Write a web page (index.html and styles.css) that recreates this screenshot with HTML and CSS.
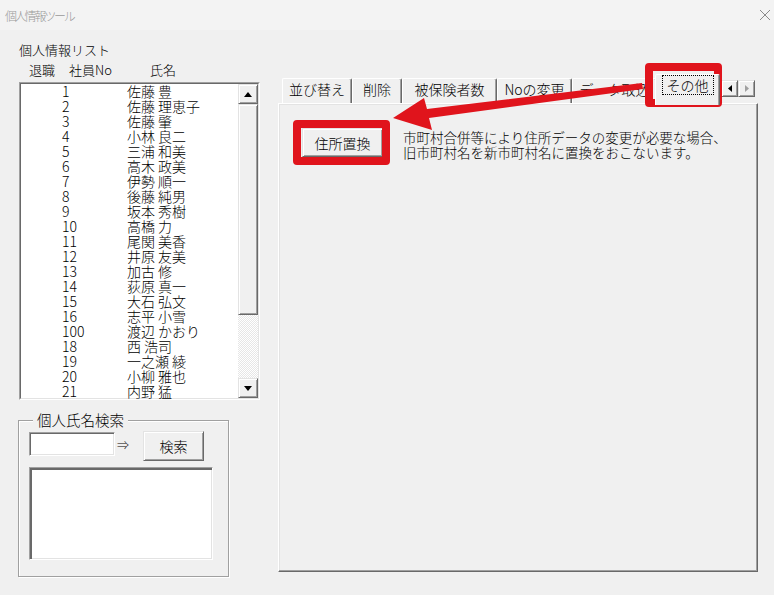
FILE: index.html
```html
<!DOCTYPE html>
<html lang="ja">
<head>
  <meta charset="UTF-8" />
  <title>個人情報ツール</title>
  <link rel="stylesheet" href="styles.css">
</head>
<body>
<div class="window">
  <div class="titlebar">
    <span class="title">個人情報ツール</span>
    <svg class="close" width="12" height="12" viewBox="0 0 12 12"><path d="M1 1L11 11M11 1L1 11" stroke="#8a8a8a" stroke-width="1" fill="none"/></svg>
  </div>

  <div class="main">
    <!-- 左側：一覧と検索 -->
    <div class="left">
      <div class="caption">個人情報リスト</div>
      <div class="heads"><span class="h-ret">退職</span><span class="h-no">社員No</span><span>氏名</span></div>

      <div class="listbox">
        <div class="listbox-in">
          <ul class="rows">
            <li><span class="no">1</span><span>佐藤 豊</span></li>
            <li><span class="no">2</span><span>佐藤 理恵子</span></li>
            <li><span class="no">3</span><span>佐藤 肇</span></li>
            <li><span class="no">4</span><span>小林 良二</span></li>
            <li><span class="no">5</span><span>三浦 和美</span></li>
            <li><span class="no">6</span><span>高木 政美</span></li>
            <li><span class="no">7</span><span>伊勢 順一</span></li>
            <li><span class="no">8</span><span>後藤 純男</span></li>
            <li><span class="no">9</span><span>坂本 秀樹</span></li>
            <li><span class="no">10</span><span>高橋 力</span></li>
            <li><span class="no">11</span><span>尾関 美香</span></li>
            <li><span class="no">12</span><span>井原 友美</span></li>
            <li><span class="no">13</span><span>加古 修</span></li>
            <li><span class="no">14</span><span>荻原 真一</span></li>
            <li><span class="no">15</span><span>大石 弘文</span></li>
            <li><span class="no">16</span><span>志平 小雪</span></li>
            <li><span class="no">100</span><span>渡辺 かおり</span></li>
            <li><span class="no">18</span><span>西 浩司</span></li>
            <li><span class="no">19</span><span>一之瀬 綾</span></li>
            <li><span class="no">20</span><span>小柳 雅也</span></li>
            <li><span class="no">21</span><span>内野 猛</span></li>
          </ul>
          <div class="vscroll">
            <div class="sbtn raised"><svg width="8" height="5" viewBox="0 0 8 5"><path d="M4 0L8 5H0Z"/></svg></div>
            <div class="thumb raised"></div>
            <div class="track"></div>
            <div class="sbtn raised"><svg width="8" height="5" viewBox="0 0 8 5"><path d="M0 0H8L4 5Z"/></svg></div>
          </div>
        </div>
      </div>

      <div class="groupbox">
        <span class="legend">個人氏名検索</span>
        <div class="search-row">
          <input class="textbox" type="text">
          <span class="then">⇒</span>
          <button class="btn raised search-btn">検索</button>
        </div>
        <div class="result"></div>
      </div>
    </div>

    <!-- 右側：タブ -->
    <div class="right">
      <div class="tabstrip">
        <div class="tab w70">並び替え</div>
        <div class="tab w50">削除</div>
        <div class="tab w95">被保険者数</div>
        <div class="tab w75">Noの変更</div>
        <div class="tab w85">データ取込</div>
        <div class="tab active"><span class="focus">その他</span></div>
        <div class="tabscroll">
          <span class="tsb raised"><svg width="4" height="7" viewBox="0 0 4 7"><path d="M4 0V7L0 3.5Z"/></svg></span>
          <span class="tsb raised off"><svg width="4" height="7" viewBox="0 0 4 7"><path d="M0 0V7L4 3.5Z"/></svg></span>
        </div>
      </div>
      <div class="panel">
        <button class="btn raised big">住所置換</button>
        <p class="desc">市町村合併等により住所データの変更が必要な場合、<br>旧市町村名を新市町村名に置換をおこないます。</p>
      </div>
    </div>
  </div>

  <!-- 注釈 -->
  <div class="mark mark-tab"></div>
  <div class="mark mark-btn"></div>
  <svg class="overlay" width="774" height="595" viewBox="0 0 774 595">
    <polygon points="642,83 643,89 429,118 432,130 393,118 424,98 427,109" fill="#e0141c"/>
  </svg>
</div>
</body>
</html>
```

FILE: styles.css
```css
* {
  box-sizing: border-box;
}
body {
  margin: 0;
  background: #f0f0f0;
  font-family: "Noto Sans CJK JP", "Liberation Sans", sans-serif;
  font-weight: 300;
  font-size: 14px;
  color: #000;
}
.window {
  position: relative;
  width: 774px;
  height: 595px;
  overflow: hidden;
}
.titlebar {
  height: 30px;
  background: #f3f3f3;
  display: flex;
  align-items: center;
  justify-content: space-between;
  padding: 0 3px 0 5px;
}
.title {
  color: #9a9a9a;
  font-size: 12px;
  letter-spacing: -2.2px;
}
.main {
  display: flex;
  padding: 12px 0 0 19px;
}
.left {
  width: 241px;
}
.caption {
  font-size: 13px;
  line-height: 16px;
}
.heads {
  display: flex;
  margin-top: 4px;
  padding-left: 10px;
  font-size: 13px;
  line-height: 16px;
}
.h-ret {
  width: 40px;
}
.h-no {
  width: 81px;
}
.listbox {
  margin-top: 4px;
  height: 318px;
  border: 1px solid;
  border-color: #a0a0a0 #fff #fff #a0a0a0;
}
.listbox-in {
  height: 100%;
  display: flex;
  background: #fff;
  border: 1px solid;
  border-color: #696969 #e3e3e3 #e3e3e3 #696969;
}
.rows {
  flex: 1;
  list-style: none;
  margin: 0;
  padding: 0;
}
.rows li {
  display: flex;
  height: 15px;
  line-height: 15px;
  white-space: nowrap;
}
.no {
  width: 106px;
  padding-left: 41px;
}
.raised {
  background: #f0f0f0;
  border: 1px solid;
  border-color: #e3e3e3 #696969 #696969 #e3e3e3;
  box-shadow: inset 1px 1px 0 #fff, inset -1px -1px 0 #a0a0a0;
}
.vscroll {
  width: 20px;
  display: flex;
  flex-direction: column;
}
.sbtn {
  height: 20px;
  display: flex;
  align-items: center;
  justify-content: center;
}
.thumb {
  height: 211px;
}
.track {
  flex: 1;
  background: repeating-conic-gradient(#fff 0 25%, #e6e6e6 0 50%) 0 0 / 2px 2px;
}
.groupbox {
  position: relative;
  margin: 20px 0 0 -1px;
  width: 211px;
  height: 157px;
  border: 1px solid #a0a0a0;
  box-shadow: 1px 1px 0 #fff, inset 1px 1px 0 #fff;
  padding: 11px 0 0 10px;
}
.legend {
  position: absolute;
  top: -10px;
  left: 14px;
  padding: 0 4px;
  background: #f0f0f0;
  line-height: 18px;
  font-size: 14.5px;
}
.search-row {
  display: flex;
  align-items: flex-start;
}
.textbox {
  width: 86px;
  height: 24px;
  margin: 0;
  background: #fff;
  border: 1px solid;
  border-color: #a0a0a0 #fff #fff #a0a0a0;
  box-shadow: inset 1px 1px 0 #696969, inset -1px -1px 0 #e3e3e3;
}
.then {
  width: 28px;
  padding: 4px 0 0 2px;
  font-size: 12px;
  line-height: 18px;
}
.btn {
  margin: 0;
  padding: 0;
  font-family: inherit;
  font-weight: inherit;
  font-size: 14px;
  color: #000;
}
.search-btn {
  width: 61px;
  height: 30px;
  margin-top: -1px;
}
.result {
  margin-top: 6px;
  width: 184px;
  height: 93px;
  background: #fff;
  border: 1px solid;
  border-color: #a0a0a0 #fff #fff #a0a0a0;
  box-shadow: inset 2px 2px 0 #696969, inset -1px -1px 0 #e3e3e3;
}
.right {
  margin-left: 18px;
  padding-top: 32px;
  width: 480px;
}
.tabstrip {
  display: flex;
  align-items: flex-end;
  height: 29px;
  padding-left: 4px;
}
.tab {
  height: 25px;
  padding-top: 1px;
  text-align: center;
  line-height: 18px;
  white-space: nowrap;
  overflow: hidden;
  border: 1px solid;
  border-bottom: none;
  border-color: #fff #696969 transparent #fff;
  box-shadow: inset -1px 0 0 #a0a0a0;
  border-radius: 2px 2px 0 0;
}
.w70 { width: 70px; }
.w50 { width: 50px; }
.w95 { width: 95px; }
.w75 { width: 75px; }
.w85 { width: 85px; }
.tab.active {
  position: relative;
  z-index: 2;
  width: 65px;
  height: 31px;
  margin: 0 -2px -2px -2px;
  padding-top: 1px;
  background: #f0f0f0;
}
.focus {
  display: inline-block;
  padding: 0 4px;
  outline: 1px dotted #000;
  outline-offset: 0;
}
.tabscroll {
  display: flex;
  align-self: flex-start;
  margin: 6px 0 0 3px;
}
.tsb {
  width: 17px;
  height: 17px;
  display: flex;
  align-items: center;
  justify-content: center;
}
.tsb.off svg {
  fill: #a0a0a0;
}
.panel {
  height: 469px;
  display: flex;
  align-items: flex-start;
  padding: 24px 0 0 23px;
  border: 1px solid;
  border-color: #fff #696969 #696969 #fff;
  box-shadow: inset -1px -1px 0 #a0a0a0, inset 1px 1px 0 #e3e3e3;
}
.big {
  width: 81px;
  height: 29px;
  flex: none;
}
.desc {
  margin: 2px 0 0 20px;
  font-size: 13.5px;
  line-height: 15px;
  white-space: nowrap;
}
.mark {
  position: absolute;
  border: 8px solid #e0141c;
  border-radius: 4px;
}
.mark-tab {
  left: 645px;
  top: 63px;
  width: 77px;
  height: 44px;
}
.mark-btn {
  left: 293px;
  top: 120px;
  width: 97px;
  height: 45px;
}
.overlay {
  position: absolute;
  left: 0;
  top: 0;
  pointer-events: none;
}
```
